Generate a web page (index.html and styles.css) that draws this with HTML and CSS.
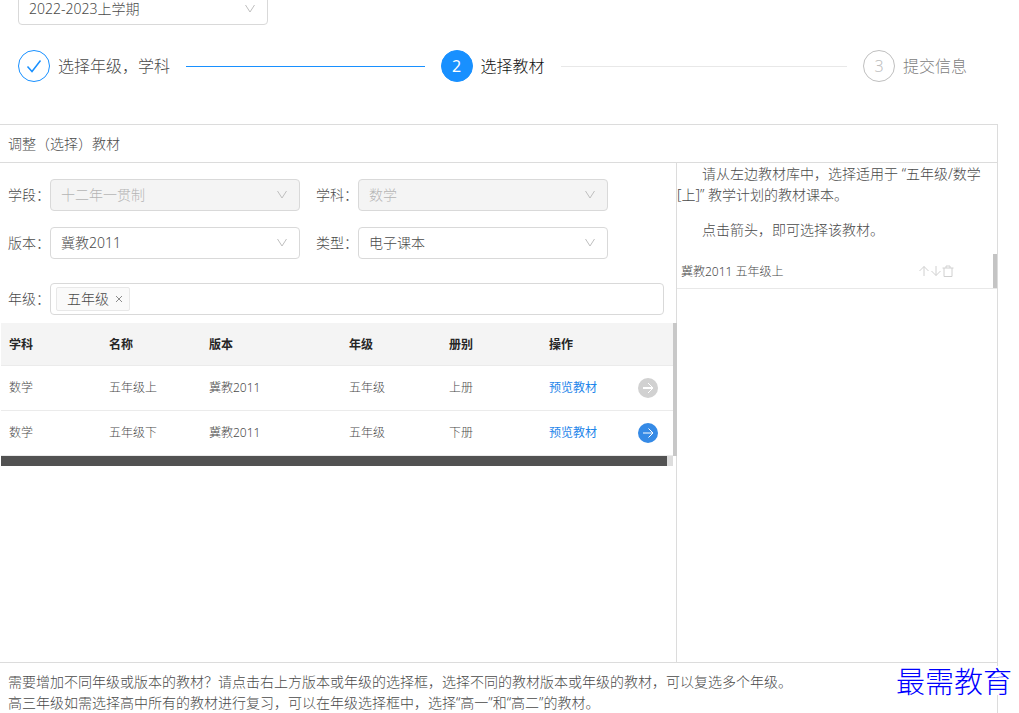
FILE: index.html
```html
<!DOCTYPE html>
<html lang="zh-CN">
<head>
<meta charset="utf-8">
<title>选择教材</title>
<link rel="stylesheet" href="styles.css">
</head>
<body>
<svg class="sprite" aria-hidden="true">
  <symbol id="chevron" viewBox="0 0 12 12"><path d="M1.500 2l4.500 7L10.500 2" /></symbol>
  <symbol id="arrow" viewBox="0 0 20 20"><circle class="disc" cx="10" cy="10" r="10"/><path d="M5 10h10M10.500 5.500l4.500 4.500-4.500 4.500"/></symbol>
</svg>
<header class="top">
  <div class="select term">
    <select aria-label="学期"><option>2022-2023上学期</option></select>
    <svg class="chevron"><use href="#chevron"/></svg>
  </div>
  <ol class="steps">
    <li class="step done">
      <span class="step-icon"><svg viewBox="0 0 16 16" width="16" height="16"><path d="M1.500 8.500l4.500 5L14.500 2.500"/></svg></span>
      <span class="step-title">选择年级，学科</span>
    </li>
    <li class="step active">
      <span class="step-icon">2</span>
      <span class="step-title">选择教材</span>
    </li>
    <li class="step wait">
      <span class="step-icon">3</span>
      <span class="step-title">提交信息</span>
    </li>
  </ol>
</header>
<main class="panel">
  <h1 class="panel-title">调整（选择）教材</h1>
  <div class="columns">
    <section class="library">
      <form class="filters">
        <div class="filter-row">
          <label for="stage">学段：</label>
          <div class="select"><select id="stage" disabled><option>十二年一贯制</option></select><svg class="chevron"><use href="#chevron"/></svg></div>
          <label class="second" for="subject">学科：</label>
          <div class="select"><select id="subject" disabled><option>数学</option></select><svg class="chevron"><use href="#chevron"/></svg></div>
        </div>
        <div class="filter-row">
          <label for="edition">版本：</label>
          <div class="select"><select id="edition"><option>冀教2011</option></select><svg class="chevron"><use href="#chevron"/></svg></div>
          <label class="second" for="kind">类型：</label>
          <div class="select"><select id="kind"><option>电子课本</option></select><svg class="chevron"><use href="#chevron"/></svg></div>
        </div>
        <div class="filter-row grades">
          <label for="grade">年级：</label>
          <div class="tags">
            <span class="tag">五年级<button type="button" aria-label="移除五年级"><svg viewBox="0 0 8 8" width="8" height="8"><path d="M1 1l6 6M7 1L1 7"/></svg></button></span>
            <input id="grade" type="text">
          </div>
        </div>
      </form>
      <div class="table-box">
        <table>
          <colgroup><col class="c-m"><col class="c-m"><col class="c-l"><col class="c-m"><col class="c-m"><col class="c-s"><col></colgroup>
          <thead>
            <tr><th>学科</th><th>名称</th><th>版本</th><th>年级</th><th>册别</th><th>操作</th><th></th></tr>
          </thead>
          <tbody>
            <tr><td>数学</td><td>五年级上</td><td>冀教2011</td><td>五年级</td><td>上册</td><td><a href="#">预览教材</a></td><td><button class="pick" type="button" disabled aria-label="选择五年级上"><svg><use href="#arrow"/></svg></button></td></tr>
            <tr><td>数学</td><td>五年级下</td><td>冀教2011</td><td>五年级</td><td>下册</td><td><a href="#">预览教材</a></td><td><button class="pick" type="button" aria-label="选择五年级下"><svg><use href="#arrow"/></svg></button></td></tr>
          </tbody>
        </table>
        <div class="bar-v"></div>
        <div class="bar-h"></div>
      </div>
    </section>
    <aside class="chosen">
      <p>请从左边教材库中，选择适用于 “五年级/数学[上]” 教学计划的教材课本。</p>
      <p>点击箭头，即可选择该教材。</p>
      <div class="book">
        <span class="book-name">冀教2011 五年级上</span>
        <button type="button" aria-label="上移"><svg viewBox="0 0 12 12"><path d="M6 11V1.500M1.500 6L6 1.500 10.500 6"/></svg></button>
        <button type="button" aria-label="下移"><svg viewBox="0 0 12 12"><path d="M6 1v9.500M1.500 6L6 10.500 10.500 6"/></svg></button>
        <button type="button" aria-label="删除"><svg viewBox="0 0 12 12"><path d="M.5 3h11M2 3v8.500h8V3M4 3V1h4v2"/></svg></button>
      </div>
    </aside>
  </div>
  <footer class="notes">
    需要增加不同年级或版本的教材？请点击右上方版本或年级的选择框，选择不同的教材版本或年级的教材，可以复选多个年级。<br>
    高三年级如需选择高中所有的教材进行复习，可以在年级选择框中，选择“高一”和“高二”的教材。
  </footer>
</main>
<div class="brand">最需教育</div>
</body>
</html>
```
FILE: styles.css
```css
* { box-sizing: border-box; }
body {
  margin: 0;
  height: 100vh;
  overflow: hidden;
  display: flex;
  flex-direction: column;
  position: relative;
  background: #fff;
  color: #4a4a4a;
  font: 300 14px/21px "Noto Sans", "Noto Sans CJK SC", sans-serif;
}
button, input, select { font: inherit; color: inherit; }
button { padding: 0; border: 0; background: none; display: flex; }
svg { fill: none; stroke: currentColor; }
.sprite { position: absolute; width: 0; height: 0; }

.top { padding: 0 52px 42px 18px; }
.select { position: relative; width: 250px; }
.select select {
  appearance: none;
  display: block;
  width: 100%;
  height: 32px;
  padding: 0 30px 1px 10px;
  border: 1px solid #d9d9d9;
  border-radius: 4px;
  background: #fff;
  opacity: 1;
}
.select select:disabled { background: #f4f4f4; color: #b5b5b5; }
.chevron {
  position: absolute;
  right: 12px;
  top: 10px;
  width: 12px;
  height: 12px;
  color: #bfbfbf;
}
.term { margin-top: -7px; }

.steps { display: flex; list-style: none; margin: 25px 0 0; padding: 0; font-size: 16px; }
.step { display: flex; align-items: center; gap: 8px; }
.step:not(:last-child) { flex: 1 1 0; }
.step:not(:last-child)::after {
  content: "";
  flex: 1;
  height: 1px;
  margin: 0 16px 0 8px;
  background: #e8e8e8;
}
.step.done::after { background: #1890ff !important; }
.step-icon {
  display: flex;
  align-items: center;
  justify-content: center;
  width: 32px;
  height: 32px;
  border: 1px solid #bfbfbf;
  border-radius: 50%;
}
.done .step-icon { border-color: #1890ff; color: #1890ff; }
.done .step-icon svg { stroke-width: 1.5; }
.active .step-icon { border-color: #1890ff; background: #1890ff; color: #fff; font-weight: 400; }
.active .step-title { color: #111; }
.wait .step-icon { color: #bfbfbf; }
.wait .step-title { color: #808080; }

.panel {
  flex: 1;
  display: flex;
  flex-direction: column;
  margin-right: 21px;
  border: solid #dcdcdc;
  border-width: 1px 1px 0 0;
}
.panel-title { margin: 0; padding: 8px; font-size: 14px; font-weight: 300; }
.columns {
  flex: 1;
  display: grid;
  grid-template-columns: 677fr 320fr;
  border: solid #dcdcdc;
  border-width: 1px 0;
}
.library { min-width: 0; border-right: 1px solid #dcdcdc; }
.filters { padding: 16px 12px 8px 8px; }
.filter-row { display: flex; align-items: center; margin-bottom: 16px; }
.filter-row.grades { margin: 24px 0 0; }
.filter-row label { flex: none; width: 42px; padding-bottom: 2px; }
.filter-row .second { margin-left: 16px; }
.tags {
  flex: 1;
  display: flex;
  align-items: center;
  height: 32px;
  padding: 0 5px;
  border: 1px solid #d9d9d9;
  border-radius: 4px;
}
.tags input { flex: 1; min-width: 0; border: 0; outline: 0; }
.tag {
  display: flex;
  align-items: center;
  gap: 6px;
  height: 24px;
  padding: 0 6px 1px 10px;
  border: 1px solid #e8e8e8;
  border-radius: 2px;
  background: #fafafa;
}
.tag button { color: #8c8c8c; }

.table-box { display: grid; grid-template-columns: 1fr 4px; margin: 0 -1px 0 1px; }
table { width: 100%; border-collapse: collapse; table-layout: fixed; font-size: 12px; line-height: 20px; }
.c-m { width: 100px; }
.c-l { width: 140px; }
.c-s { width: 89px; }
th, td { padding: 12px 8px; text-align: left; border-bottom: 1px solid #ebebeb; }
th { padding: 12px 8px 10px; background: #f4f4f4; color: #262626; font-weight: 700; }
td { color: #4a4a4a; }
td a { color: #1f86ea; font-weight: 400; text-decoration: none; }
.pick { color: #fff; border-radius: 50%; }
.pick svg { width: 20px; height: 20px; }
.disc { fill: #358ae6; stroke: none; }
.pick:disabled { color: #fff; }
.pick:disabled svg { fill: none; }
.pick:disabled { filter: grayscale(1) brightness(1.65); }
.bar-v { background: #c8c8c8; }
.bar-h {
  height: 10px;
  border: solid #ddd;
  border-width: 0 6px 0 0;
  background: #525252;
}

.chosen { min-width: 0; }
.chosen p { margin: 0 0 14px; text-indent: 25px; }
.book {
  display: flex;
  align-items: center;
  height: 35px;
  padding: 0 43px 0 4px;
  border-bottom: 1px solid #e8e8e8;
  box-shadow: inset -4px 0 #c4c4c4;
  font-size: 12px;
}
.book-name { flex: 1; }
.book button { color: #d0d0d0; }
.book svg { width: 12px; height: 12px; }
.notes { padding: 8px 8px 0; height: 50px; }
.brand {
  position: absolute;
  right: 7px;
  bottom: 18px;
  background: #fff;
  color: #00f;
  font: 300 29px/29px KaiTi, "AR PL UKai CN", "Noto Sans CJK SC", serif;
}
```
